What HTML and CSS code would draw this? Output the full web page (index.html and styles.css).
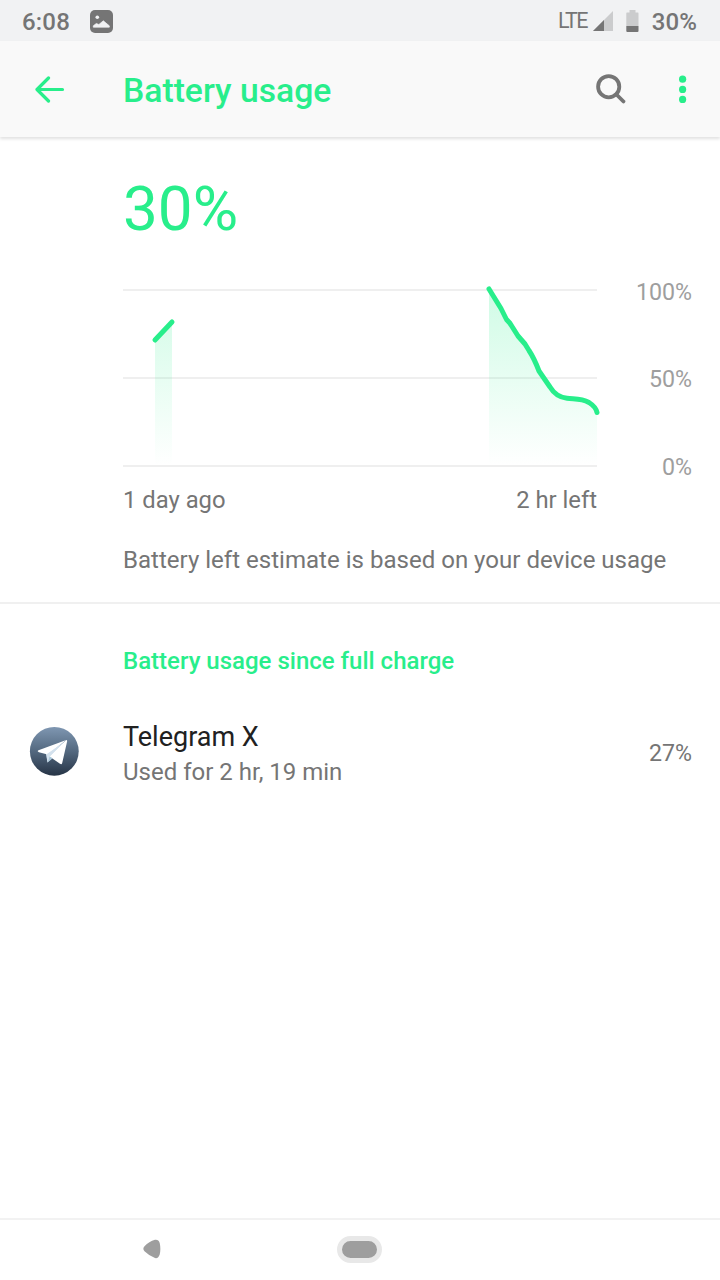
FILE: index.html
```html
<!DOCTYPE html>
<html lang="en">
<head>
<meta charset="utf-8">
<title>Battery usage</title>
<link rel="stylesheet" href="styles.css">
</head>
<body>
<div class="screen">
  <div class="status-bar">
    <span class="clock">6:08</span>
    <svg class="photo-icon" width="23" height="23" viewBox="0 0 23 23">
      <rect width="23" height="23" rx="5" fill="#757575"/>
      <circle cx="7.3" cy="7.3" r="1.8" fill="#f1f2f3"/>
      <path d="M3.3 17.2v-1.4l3-2.3 2.6 1 4.4-3.7 6 5v1.4z" fill="#f1f2f3" stroke="#f1f2f3" stroke-width=".7" stroke-linejoin="round"/>
    </svg>
    <span class="network">LTE</span>
    <svg class="signal-icon" width="20" height="20" viewBox="0 0 20 20">
      <path d="M20 0v20H0z" fill="#cbcccd"/>
      <path d="M11 9v11H0z" fill="#757575"/>
    </svg>
    <svg class="battery-icon" width="13" height="22" viewBox="0 0 13 22">
      <path d="M3.5 0h6v2.500H12q.5 0 .5 1V16H.3V3.500q0-1 .6-1h2.600z" fill="#cbcccd"/>
      <path d="M.3 16h12.200v5q0 1-1 1H1.300q-1 0-1-1z" fill="#757575"/>
    </svg>
    <span class="charge">30%</span>
  </div>

  <header class="app-bar">
    <svg class="back-icon" width="30" height="28" viewBox="0 0 30 28">
      <path d="M27.500 14.500H2.500M13.500 3L2 14.500l11.500 11.500" fill="none" stroke="#28ee8b" stroke-width="3.200" stroke-linecap="round" stroke-linejoin="round"/>
    </svg>
    <h1 class="title">Battery usage</h1>
    <svg class="search-icon" width="31" height="31" viewBox="0 0 31 31">
      <circle cx="12.700" cy="12.700" r="10.600" fill="none" stroke="#757575" stroke-width="3.800"/>
      <path d="M20.500 20.500l7 7" stroke="#757575" stroke-width="3.800" stroke-linecap="round"/>
    </svg>
    <svg class="more-icon" width="8" height="28" viewBox="0 0 8 28">
      <g fill="#28ee8b"><circle cx="3.600" cy="4.200" r="3.600"/><circle cx="3.600" cy="14.400" r="3.600"/><circle cx="3.600" cy="24.400" r="3.600"/></g>
    </svg>
  </header>

  <main class="content">
    <section class="summary">
      <div class="level">30%</div>
      <div class="chart">
        <div class="plot">
          <svg class="graph" width="480" height="186" viewBox="0 0 480 186">
            <defs>
              <linearGradient id="fade" gradientUnits="userSpaceOnUse" x1="0" y1="5" x2="0" y2="181">
                <stop offset="0" stop-color="#28ee8b" stop-opacity=".22"/>
                <stop offset="1" stop-color="#28ee8b" stop-opacity="0"/>
              </linearGradient>
            </defs>
            <path d="M0 5h474M0 93h474M0 181h474" stroke="#efefef" stroke-width="2"/>
            <path d="M32 55L49 37V181H32z" fill="url(#fade)"/>
            <path d="M366 4L378 24L384 35L388 39L396 51L401 56L409 69L417 87L427 103Q433 112 444 113.500C455 114 472 114 474 128V181H366z" fill="url(#fade)"/>
            <g fill="none" stroke="#28ee8b" stroke-width="5" stroke-linecap="round" stroke-linejoin="round">
              <path d="M32 55L49 37"/>
              <path d="M366 4L378 23.500L383.500 34.500L387 38.300L395 51L402 59L406 65.500Q411 73 416 86L427 102Q433 112 444 113.300C452 114.200 458 113 466 117.500Q473 122 474 127.500"/>
            </g>
          </svg>
          <div class="time-labels"><span>1 day ago</span><span>2 hr left</span></div>
        </div>
        <div class="scale"><span>100%</span><span>50%</span><span>0%</span></div>
      </div>
      <p class="estimate">Battery left estimate is based on your device usage</p>
    </section>

    <section class="usage">
      <h2 class="section-title">Battery usage since full charge</h2>
      <div class="app-row">
        <svg class="app-icon" width="50" height="50" viewBox="0 0 50 50">
          <defs>
            <linearGradient id="sky" x1="0" y1="0" x2="0" y2="1">
              <stop offset="0" stop-color="#7f97b2"/>
              <stop offset=".5" stop-color="#53687f"/>
              <stop offset="1" stop-color="#263446"/>
            </linearGradient>
          </defs>
          <circle cx="25.300" cy="25.300" r="24.400" fill="url(#sky)"/>
          <path d="M17 28L18.500 36.500L22.500 33L37 15z" fill="#c9dbea"/>
          <path d="M9.500 24.200L37.300 14L18.500 28.500L10 26.200Q7.800 25.300 9.500 24.200z" fill="#fff"/>
          <path d="M37 14.200Q38.400 13.800 38.100 15.500L33.200 37Q32.700 39 31 37.800L20.500 30.500z" fill="#fff"/>
          <path d="M18.500 36.500L20.500 30.300L23.500 32.300z" fill="#a9c6d8"/>
          <path d="M17.500 28.300L34 17L20.500 30.500L18.500 36.500z" fill="#d3e1ed"/>
        </svg>
        <div class="app-text">
          <div class="app-name">Telegram X</div>
          <div class="app-detail">Used for 2 hr, 19 min</div>
        </div>
        <span class="app-share">27%</span>
      </div>
    </section>
  </main>

  <nav class="nav-bar">
    <svg class="nav-back" width="18" height="20" viewBox="0 0 18 20">
      <path d="M1.500 7.300Q6 2.300 12 .8Q15.500.2 16.700 4Q18 10 16.700 15.500Q15.300 19.800 12 19Q6 16.800 1.500 12.300Q-.8 9.800 1.500 7.300z" fill="#9e9e9e"/>
    </svg>
    <span class="nav-home"></span>
  </nav>
</div>
</body>
</html>
```

FILE: styles.css
```css
* { box-sizing: border-box; }
body {
  margin: 0;
  background: #fff;
  font-family: Roboto, "Noto Sans", sans-serif;
  color: #757575;
}
svg { display: block; flex: none; }
.screen { display: flex; flex-direction: column; width: 720px; height: 1280px; overflow: hidden; }
.status-bar {
  display: flex;
  align-items: center;
  height: 41px;
  flex: none;
  padding: 1px 23px 0 22px;
  background: #f1f2f3;
  font-size: 24px;
  font-weight: 500;
}
.clock { width: 68px; padding-top: 2px; letter-spacing: .2px; }
.network { margin-left: auto; margin-right: 6px; margin-top: -1px; font-size: 21.500px; font-weight: 400; letter-spacing: -1.700px; }
.signal-icon { margin-right: 13px; }
.battery-icon { margin-right: 13px; margin-top: -1px; }
.charge { padding-top: 2px; letter-spacing: .1px; }
.app-bar {
  display: flex;
  align-items: center;
  height: 96px;
  flex: none;
  padding: 0 33px 0 35px;
  background: #f9f9f9;
  box-shadow: 0 2px 3px rgba(0, 0, 0, .12);
}
.title { margin: 3px auto 0 58px; font-size: 33.700px; font-weight: 500; line-height: 40px; color: #28ee8b; }
.search-icon { margin-right: 52px; }
.content { flex: 1; }
.summary { height: 467px; padding: 35px 28px 0 123px; border-bottom: 2px solid #f0f0f0; }
.level { font-size: 62px; line-height: 73px; color: #28ee8b; }
.chart { display: flex; justify-content: space-between; margin-top: 40px; font-size: 23.800px; line-height: 28px; }
.plot { width: 474px; }
.graph { overflow: visible; }
.time-labels { display: flex; justify-content: space-between; margin-top: 15px; }
.scale { display: flex; flex-direction: column; gap: 59.400px; margin-top: -7px; text-align: right; font-size: 23.200px; color: #9e9e9e; }
.estimate { margin: 32px -20px 0 0; font-size: 24.050px; line-height: 28px; white-space: nowrap; }
.usage { padding: 43px 28px 0 29px; }
.section-title { margin: 0 0 0 94px; font-size: 24px; font-weight: 500; line-height: 28px; color: #28ee8b; }
.app-row { display: flex; align-items: center; margin-top: 44px; }
.app-icon { margin-top: -6px; }
.app-text { margin-left: 44px; flex: 1; }
.app-name { font-size: 27px; line-height: 36px; color: #212121; }
.app-detail { font-size: 24px; line-height: 34px; }
.app-share { margin-top: -3px; font-size: 23.200px; }
.nav-bar { display: flex; align-items: center; height: 62px; flex: none; border-top: 2px solid #f2f2f2; padding: 0 0 2px 143px; }
.nav-home { width: 45px; height: 27px; margin-left: 176px; border: 5px solid #e8e8e8; border-radius: 14px; background: #9e9e9e; }
```
